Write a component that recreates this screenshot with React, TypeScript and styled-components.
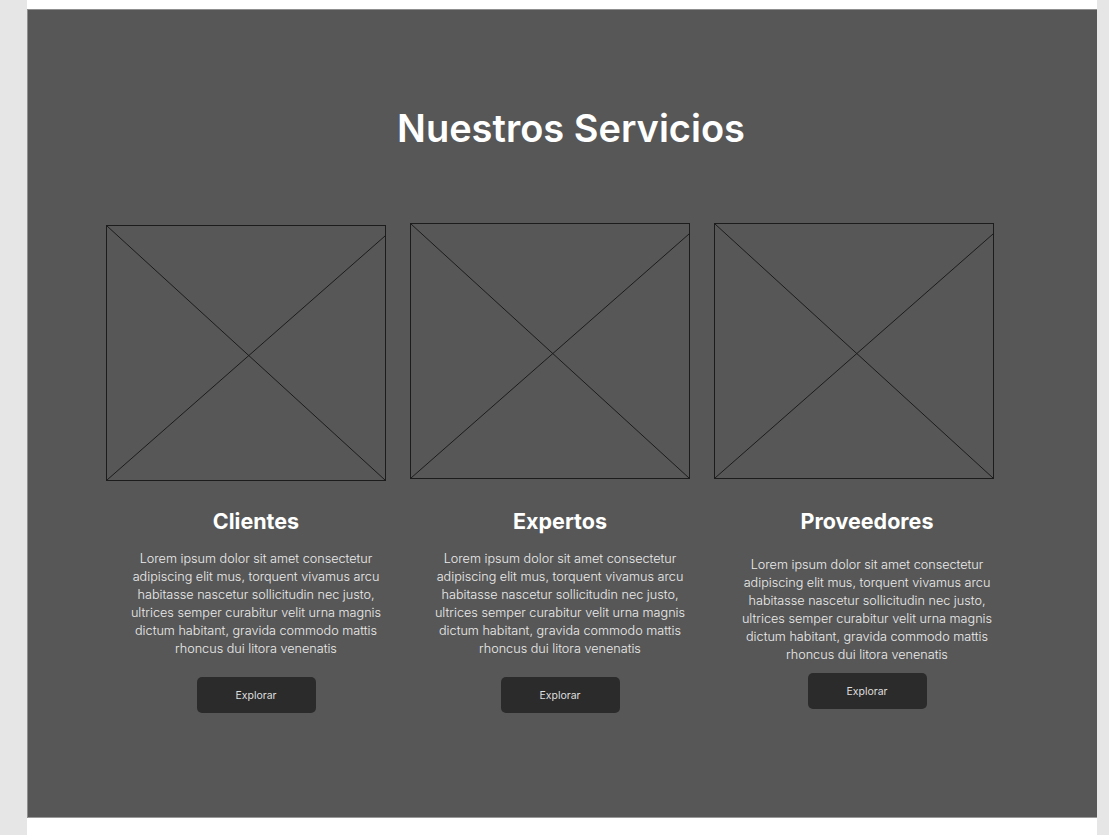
import React from "react";
import styled, { createGlobalStyle } from "styled-components";

const Global = createGlobalStyle`
  html, body { margin: 0; padding: 0; }
  body {
    background: #e6e6e6;
    font-family: Inter, "Noto Sans", "DejaVu Sans", sans-serif;
  }
`;

const Page = styled.div`
  margin-left: 27px;
  width: 1070px;
  min-height: 835px;
  background: #ffffff;
  padding-top: 9px;
  box-sizing: border-box;
`;

const Panel = styled.section`
  height: 809px;
  background: #575757;
  box-sizing: border-box;
  padding: 92px 0 0 79px;
  box-shadow: inset 1px 1px 0 #8f8f8f, inset 0 -1px 0 #9a9a9a;
`;

const Title = styled.h1`
  margin: 0;
  width: 912px;
  padding-left: 18px;
  box-sizing: border-box;
  text-align: center;
  color: #ffffff;
  font-size: 38px;
  line-height: 54px;
  font-weight: 600;
`;

const Grid = styled.div`
  margin-top: 68px;
  display: grid;
  grid-template-columns: repeat(3, 300px);
  column-gap: 4px;
  align-items: start;
`;

const Card = styled.article`
  display: flex;
  flex-direction: column;
`;

const ImageBox = styled.div<{ $shift: number }>`
  width: 280px;
  height: 256px;
  margin-top: ${(p) => p.$shift}px;
  margin-bottom: ${(p) => -p.$shift}px;
  border: 1px solid #1c1c1c;
  box-sizing: border-box;
  svg { display: block; width: 100%; height: 100%; }
`;

const Body = styled.div<{ $pad: number }>`
  display: flex;
  flex-direction: column;
  align-items: center;
  padding-left: ${(p) => p.$pad}px;
`;

const Heading = styled.h2`
  margin: 27px 0 0;
  color: #ffffff;
  font-size: 21.5px;
  line-height: 30px;
  font-weight: 700;
`;

const Text = styled.p<{ $top: number }>`
  margin: ${(p) => p.$top}px 0 0;
  color: #ececec;
  font-size: 12.65px;
  line-height: 18px;
  font-weight: 300;
  text-align: center;
  white-space: nowrap;
`;

const Button = styled.button<{ $top: number }>`
  margin-top: ${(p) => p.$top}px;
  width: 119px;
  height: 36px;
  border: none;
  border-radius: 5px;
  background: #2b2b2b;
  color: #dedede;
  font-family: inherit;
  font-size: 10.5px;
  font-weight: 400;
  cursor: pointer;
`;

const lines = [
  "Lorem ipsum dolor sit amet consectetur",
  "adipiscing elit mus, torquent vivamus arcu",
  "habitasse nascetur sollicitudin nec justo,",
  "ultrices semper curabitur velit urna magnis",
  "dictum habitant, gravida commodo mattis",
  "rhoncus dui litora venenatis",
];

const Placeholder = () => (
  <svg viewBox="0 0 278 254" preserveAspectRatio="none">
    <line x1="0" y1="0" x2="278" y2="254" stroke="#1c1c1c" strokeWidth="1" />
    <line x1="278" y1="10" x2="0" y2="254" stroke="#1c1c1c" strokeWidth="1" />
  </svg>
);

const cards = [
  { title: "Clientes", shift: 2, pad: 0, textTop: 14, btnTop: 19 },
  { title: "Expertos", shift: 0, pad: 0, textTop: 14, btnTop: 19 },
  { title: "Proveedores", shift: 0, pad: 6, textTop: 20, btnTop: 9 },
];

export default function App() {
  return (
    <>
      <Global />
      <Page>
        <Panel>
          <Title>Nuestros Servicios</Title>
          <Grid>
            {cards.map((c) => (
              <Card key={c.title}>
                <ImageBox $shift={c.shift}>
                  <Placeholder />
                </ImageBox>
                <Body $pad={c.pad}>
                  <Heading>{c.title}</Heading>
                  <Text $top={c.textTop}>
                    {lines.map((l, i) => (
                      <React.Fragment key={i}>
                        {l}
                        {i < lines.length - 1 && <br />}
                      </React.Fragment>
                    ))}
                  </Text>
                  <Button $top={c.btnTop}>Explorar</Button>
                </Body>
              </Card>
            ))}
          </Grid>
        </Panel>
      </Page>
    </>
  );
}
